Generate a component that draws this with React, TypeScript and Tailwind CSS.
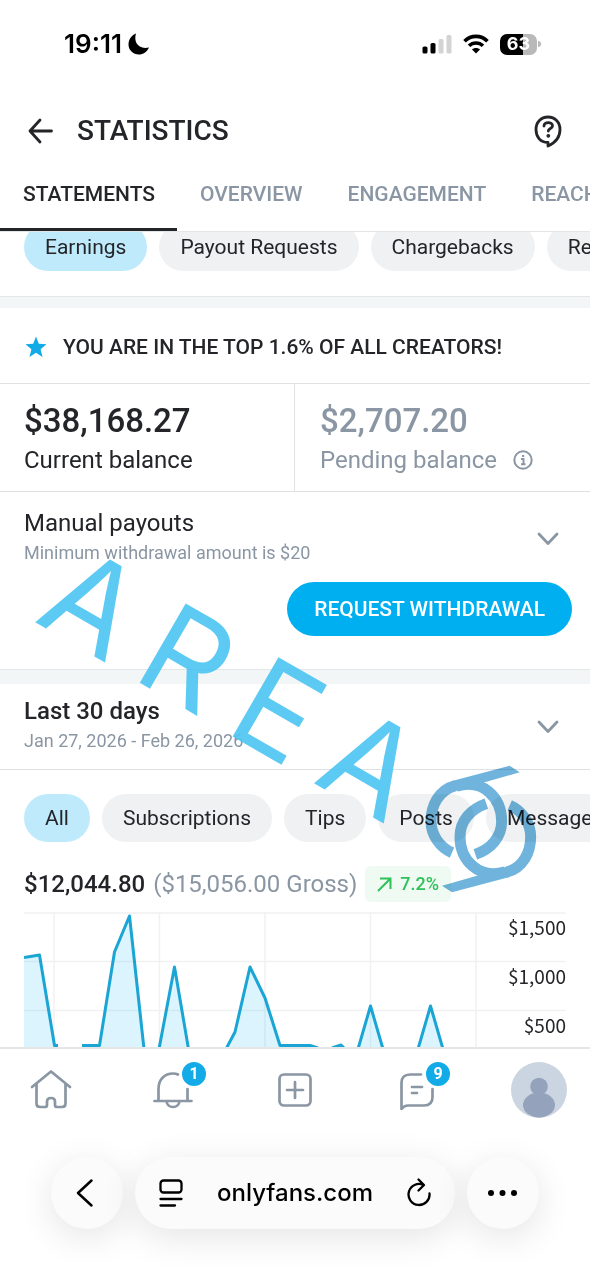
import React from "react";

const tabs = ["STATEMENTS", "OVERVIEW", "ENGAGEMENT", "REACH"];
const reports = ["Earnings", "Payout Requests", "Chargebacks", "Referrals"];
const sources = ["All", "Subscriptions", "Tips", "Posts", "Messages"];

function Pills({ items }: { items: string[] }) {
  return (
    <>
      {items.map((item, i) => (
        <button
          key={item}
          className={
            "h-12 shrink-0 rounded-full px-[21px] text-[21px] leading-6 whitespace-nowrap text-[#242529] " +
            (i === 0 ? "bg-[#bfeafb]" : "bg-[#f0f1f2]")
          }
        >
          {item}
        </button>
      ))}
    </>
  );
}

function StatusBar() {
  return (
    <div className="flex h-[88px] items-center justify-between pr-[49px] pl-16 font-['Inter',sans-serif]">
      <div className="flex items-center gap-1.5">
        <span className="text-[26px] leading-8 font-semibold text-black">19:11</span>
        <svg width="22" height="22" viewBox="0 0 22 22" aria-label="Do not disturb">
          <path d="M8 .5C5.500 8 9.500 17 21 14.500C19 19 15 21.500 11 21.500C5 21.500 .5 17 .5 11.500C.5 6.500 3.500 2.200 8 .5Z" fill="#000" />
        </svg>
      </div>
      <div className="flex items-center gap-[11px]">
        <svg width="30" height="20" viewBox="0 0 30 20" aria-label="Signal">
          <rect x="0.500" y="12.500" width="5" height="7" rx="1.600" fill="#000" />
          <rect x="8.500" y="9" width="5" height="10.500" rx="1.600" fill="#000" />
          <rect x="16.500" y="5" width="5" height="14.500" rx="1.600" fill="#d3d3d3" />
          <rect x="24.500" y="1" width="5" height="18.500" rx="1.600" fill="#d3d3d3" />
        </svg>
        <svg width="26" height="20" viewBox="0 0 26 20" fill="none" stroke="#000" strokeWidth="3.600" aria-label="Wi-Fi">
          <path d="M1.500 7.200C8 .8 18 .8 24.500 7.200" />
          <path d="M6 11.800C10 8 16 8 20 11.800" />
          <path d="M13 19.500L9 15.500C11 13.500 15 13.500 17 15.500Z" fill="#000" stroke="none" />
        </svg>
        <div className="flex items-center gap-px">
          <div className="flex h-[21px] w-[37px] items-center justify-center rounded-[7px] bg-linear-to-r from-black from-63% to-[#b9b9b9] to-63% text-[18px] leading-5 font-bold text-white">
            63
          </div>
          <div className="h-1.5 w-[3px] rounded-r-full bg-[#b9b9b9]" />
        </div>
      </div>
    </div>
  );
}

function Chevron() {
  return (
    <svg width="24" height="16" viewBox="0 0 24 16" fill="none" stroke="#8a96a3" strokeWidth="2.800" strokeLinecap="round" strokeLinejoin="round">
      <path d="M3 3L12 12.500L21 3" />
    </svg>
  );
}

function Chart() {
  return (
    <div className="mx-6 grid h-[135px] overflow-hidden">
      <svg className="col-start-1 row-start-1 h-[136px] w-full" viewBox="24 912 542 136" preserveAspectRatio="none" aria-label="Earnings chart">
        <g stroke="#f1f1f1" strokeWidth="1.500">
          <path d="M24 913H566M24 961.500H566M24 1010.500H566" />
          <path d="M54 912V1048M159.500 912V1048M265 912V1048M370.500 912V1048M476 912V1048" />
        </g>
        <g fill="#00aff0" fillOpacity=".14">
          <path d="M24 957.500L39.500 955L54.500 1046V1048H24Z" />
          <path d="M99 1048L114.500 952L129.500 916L144 1048Z" />
          <path d="M159 1048L174.500 967L188 1048Z" />
          <path d="M226 1048L235 1032L250 967L265 998L280 1048Z" />
          <path d="M358 1048L370.500 1006L383 1048Z" />
          <path d="M418 1048L430.500 1006L443 1048Z" />
        </g>
        <g fill="none" stroke="#1aa5d5" strokeWidth="3" strokeLinejoin="round">
          <path d="M24 957.500L39.500 955L54.500 1045.500H58" />
          <path d="M82 1045.500H99.500L114.500 952L129.500 916L144 1049" />
          <path d="M159 1049L174.500 967L188.500 1049" />
          <path d="M226 1049L235 1032L250 967L265 998L280 1045.500H310L318 1048" />
          <path d="M332 1048L341 1045L344 1048" />
          <path d="M358 1049L370.500 1006L383 1049" />
          <path d="M418 1049L430.500 1006L443 1049" />
        </g>
      </svg>
      <div className="col-start-1 row-start-1 flex flex-col gap-5 text-right font-['Noto_Sans_CJK_SC',sans-serif] text-[19px] leading-[29px] text-[#242529]">
        <span>$1,500</span>
        <span>$1,000</span>
        <span>$500</span>
      </div>
    </div>
  );
}

function Badge({ children }: { children: React.ReactNode }) {
  return (
    <span className="absolute -top-0.5 -right-2 flex size-7 items-center justify-center rounded-full border-2 border-white bg-[#12abe8] text-[16px] leading-4 font-bold text-white">
      {children}
    </span>
  );
}

function BottomNav() {
  const item = "relative flex h-14 w-[54px] items-center justify-center";
  const line = {
    fill: "none",
    stroke: "#8a96a3",
    strokeWidth: 2.7,
    strokeLinecap: "round" as const,
    strokeLinejoin: "round" as const,
  };
  return (
    <nav className="flex h-[87px] items-center justify-between border-t-2 border-[#e4e6e8] bg-white px-6 pb-[3px]">
      <button aria-label="Home" className={item}>
        <svg width="42" height="42" viewBox="0 0 42 42" {...line}>
          <path d="M2 18L21 2.500L40 18M6.500 15V34.500Q6.500 38 10 38H15Q17 38 17 36V32.500Q17 29 21 29Q25 29 25 32.500V36Q25 38 27 38H32Q35.500 38 35.500 34.500V15" />
        </svg>
      </button>
      <button aria-label="Notifications" className={item}>
        <svg width="42" height="42" viewBox="0 0 42 42" {...line}>
          <path d="M2.500 32H39.500M6.500 32V20C6.500 10 13 4.500 21 4.500Q24 4.500 26 5.500M35.500 20V32M14.500 32C15 40 27 40 27.500 32" />
        </svg>
        <Badge>1</Badge>
      </button>
      <button aria-label="New post" className={item}>
        <svg width="42" height="42" viewBox="0 0 42 42" {...line}>
          <rect x="5.500" y="5.500" width="31" height="31" rx="4.500" />
          <path d="M21 13V29M13 21H29" />
        </svg>
      </button>
      <button aria-label="Messages" className={item}>
        <svg width="42" height="42" viewBox="0 0 42 42" {...line}>
          <path d="M25 5.500H14Q5.500 5.500 5.500 14V40Q8 36.500 12 36.500H28Q36.500 36.500 36.500 28V20M16 18H26M16 24H21" />
        </svg>
        <Badge>9</Badge>
      </button>
      <button aria-label="Profile" className={item}>
        <svg width="56" height="56" viewBox="0 0 56 56" className="shrink-0">
          <circle cx="28" cy="28" r="28" fill="#cbd5e1" />
          <circle cx="28" cy="24.500" r="8.800" fill="#94a3bb" />
          <ellipse cx="28" cy="43" rx="16" ry="12.500" fill="#94a3bb" />
        </svg>
      </button>
    </nav>
  );
}

function BrowserBar() {
  const round = "flex size-[72px] shrink-0 items-center justify-center rounded-full bg-[#fbfbfb] shadow-[0_8px_36px_rgba(0,0,0,0.11)]";
  return (
    <div className="flex gap-3 px-[51px] pt-[23px] pb-[51px] font-['Inter',sans-serif]">
      <button aria-label="Back" className={round}>
        <svg width="32" height="32" viewBox="0 0 32 32" fill="none" stroke="#000" strokeWidth="2.500" strokeLinecap="round" strokeLinejoin="round">
          <path d="M20.500 3.500L7 16L20.500 28.500" />
        </svg>
      </button>
      <div className="flex h-[72px] grow items-center justify-between rounded-full bg-[#fbfbfb] px-[23px] shadow-[0_8px_36px_rgba(0,0,0,0.11)]">
        <button aria-label="Page menu">
          <svg width="26" height="30" viewBox="0 0 26 30" fill="none" stroke="#000" strokeWidth="2.300" strokeLinecap="round">
            <rect x="2.500" y="2.500" width="21" height="12" rx="3" />
            <path d="M2.500 21H23.500M2.500 27.500H17" />
          </svg>
        </button>
        <span className="text-[24px] leading-8 font-medium text-black">onlyfans.com</span>
        <button aria-label="Reload">
          <svg width="26" height="30" viewBox="0 0 26 30" fill="none" stroke="#000" strokeWidth="2.300" strokeLinecap="round" strokeLinejoin="round">
            <path d="M23.500 15.500A10.500 10.500 0 1 1 17.500 7M12.500 1.500L18 7L12.500 12.500" />
          </svg>
        </button>
      </div>
      <button aria-label="More" className={round}>
        <svg width="32" height="8" viewBox="0 0 32 8">
          <circle cx="4" cy="4" r="3" />
          <circle cx="15.500" cy="4" r="3" />
          <circle cx="27" cy="4" r="3" />
        </svg>
      </button>
    </div>
  );
}

function Watermark() {
  return (
    <div className="pointer-events-none absolute inset-0 overflow-hidden" aria-hidden="true">
      <div className="absolute top-[620px] left-[33px]">
        <div className="absolute bottom-0 left-0 flex origin-bottom-left rotate-[30deg] gap-[26px] font-['Inter',sans-serif] text-[126px] leading-[90px] font-normal text-[#4bc5f2] opacity-90">
          <span>A</span>
          <span>R</span>
          <span>E</span>
          <span>A</span>
        </div>
      </div>
      <svg className="absolute top-[763px] left-[423px] mix-blend-multiply" width="117" height="133" viewBox="400 250 351 399" fill="none" stroke="#70b4dd" strokeWidth="33">
        <g id="half">
          <path d="M660 258L690 278L585 308L500 334L490 303Z" fill="#70b4dd" stroke="none" />
          <path d="M497 318C445 332 424 380 424 425C424 465 450 503 487 519" />
          <path d="M500 320C580 295 636 355 636 425C636 472 604 508 557 524" />
        </g>
        <use href="#half" transform="rotate(180 573.500 448)" />
      </svg>
    </div>
  );
}

export default function App() {
  return (
    <main className="relative min-h-screen overflow-hidden bg-white font-['Roboto',sans-serif] text-[#242529]">
      <StatusBar />
      <header className="flex h-[84px] items-center gap-6 px-7 pt-0.5">
        <button aria-label="Go back">
          <svg width="25" height="26" viewBox="0 0 25 26" fill="none" stroke="#242529" strokeWidth="2.800" strokeLinecap="round" strokeLinejoin="round">
            <path d="M12 2L2 13L12 24M2 13H23.500" />
          </svg>
        </button>
        <h1 className="grow text-[28px] leading-8 font-medium">STATISTICS</h1>
        <button aria-label="Help" className="-mr-0.5">
          <svg width="32" height="36" viewBox="0 0 32 36" fill="none" stroke="#242529" strokeWidth="2.800" strokeLinecap="round" strokeLinejoin="round">
            <path d="M16 33V29.500C8 29.500 4 23.500 4 16.500C4 9 9 4 16 4C23 4 28 9 28 16.500C28 23.500 24 29.500 16 33Z" />
            <path d="M12 13C12 8.500 20.500 8.500 20.500 13C20.500 15.500 16.300 15.500 16.300 18" />
            <circle cx="16.300" cy="22.800" r="1.900" fill="#242529" stroke="none" />
          </svg>
        </button>
      </header>
      <div className="flex h-[60px] overflow-hidden border-b border-[#e4e6e8] text-[21px] leading-[45px] font-medium">
        {tabs.map((tab, i) => (
          <button
            key={tab}
            className={
              "flex shrink-0 items-start pr-[22px] pl-[23px] " +
              (i === 0 ? "border-b-3 border-[#242529]" : "text-[#8a96a3]")
            }
          >
            {tab}
          </button>
        ))}
      </div>
      <div className="flex h-16 items-end gap-3 overflow-hidden px-6 pb-[25px]">
        <Pills items={reports} />
      </div>
      <div className="h-3 border-t border-[#e4e6e8] bg-[#f3f6f7]" />
      <div className="flex h-[75px] items-center gap-4 pt-0.5 pr-6 pl-[25px]">
        <svg width="22" height="22" viewBox="0 0 22 22" fill="#12abe8">
          <path d="M11 .5L13.800 7.700L21.500 8.200L15.600 13.200L17.500 21L11 16.800L4.500 21L6.400 13.200L.5 8.200L8.200 7.700Z" />
        </svg>
        <p className="text-[21px] leading-6 font-medium">YOU ARE IN THE TOP 1.6% OF ALL CREATORS!</p>
      </div>
      <section className="grid h-[109px] grid-cols-2 border-y border-[#dfe2e5]">
        <div className="border-r border-[#dfe2e5] pt-4 pl-6">
          <p className="text-[33px] leading-[42px] font-medium">$38,168.27</p>
          <p className="text-[24px] leading-9">Current balance</p>
        </div>
        <div className="pt-4 pl-[25px] text-[#8a96a3]">
          <p className="text-[33px] leading-[42px] font-medium">$2,707.20</p>
          <p className="flex items-center gap-4 text-[24px] leading-9">
            Pending balance
            <svg width="20" height="20" viewBox="0 0 20 20" fill="none" stroke="#8a96a3" strokeWidth="2">
              <circle cx="10" cy="10" r="8.700" />
              <path d="M8 9H10.500V14M8 14.200H12.500M9 6H11.200" />
            </svg>
          </p>
        </div>
      </section>
      <section className="flex h-[177px] flex-col justify-between pt-[13px] pr-[18px] pb-[33px] pl-6">
        <div className="flex items-end justify-between pr-3">
          <div>
            <h2 className="text-[24px] leading-9">Manual payouts</h2>
            <p className="text-[18px] leading-6 text-[#8a96a3]">Minimum withdrawal amount is $20</p>
          </div>
          <button aria-label="Expand payouts" className="flex h-13 items-center">
            <Chevron />
          </button>
        </div>
        <button className="h-[54px] self-end rounded-full bg-[#00aff0] px-[27px] text-[21px] leading-6 font-medium text-white">
          REQUEST WITHDRAWAL
        </button>
      </section>
      <div className="h-[15px] border-t border-[#e4e6e8] bg-[#f3f6f7]" />
      <section className="flex h-[86px] items-center justify-between border-b border-[#dfe2e5] pr-[30px] pl-6">
        <div className="pb-[7px]">
          <h2 className="text-[24px] leading-9 font-medium">Last 30 days</h2>
          <p className="text-[18px] leading-6 text-[#8a96a3]">Jan 27, 2026 - Feb 26, 2026</p>
        </div>
        <button aria-label="Change period">
          <Chevron />
        </button>
      </section>
      <div className="flex gap-3 overflow-hidden px-6 pt-6">
        <Pills items={sources} />
      </div>
      <div className="flex h-[70px] items-center gap-2 px-6 pt-3.5 text-[24px] leading-9">
        <span className="font-medium">$12,044.80</span>
        <span className="text-[#8a96a3]">($15,056.00 Gross)</span>
        <span className="flex h-9 items-center gap-2 rounded-md bg-[#eefaf2] px-3 text-[18px] font-medium text-[#2fc15a]">
          <svg width="15" height="15" viewBox="0 0 15 15" fill="none" stroke="#2fc15a" strokeWidth="2">
            <path d="M1 14L13.500 1.500M3 1.500H13.500V12" />
          </svg>
          7.2%
        </span>
      </div>
      <Chart />
      <BottomNav />
      <BrowserBar />
      <Watermark />
    </main>
  );
}
